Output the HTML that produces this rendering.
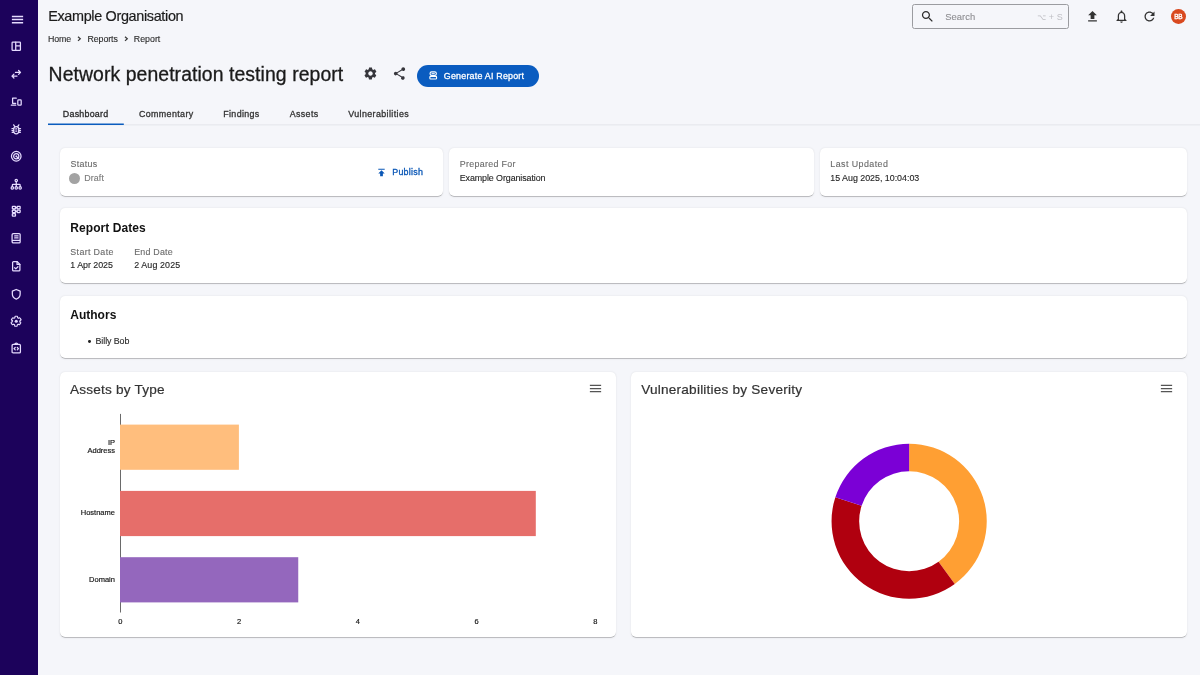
<!DOCTYPE html>
<html lang="en"><head><meta charset="utf-8"><title>Network penetration testing report</title>
<style>
*{box-sizing:border-box;margin:0;padding:0}
html,body{width:1200px;height:675px;overflow:hidden;background:#f5f6fa;font-family:"Liberation Sans", Arial, Helvetica, sans-serif;}
.t{position:absolute;white-space:nowrap;line-height:1;display:block}
.i{position:absolute;display:block;overflow:visible}
.abs{position:absolute}
.card{position:absolute;background:#fff;border-radius:5px;box-shadow:0 1.25px .6px -.6px rgba(0,0,0,.16),0 .6px .6px 0 rgba(0,0,0,.11),0 .6px 2px 0 rgba(0,0,0,.10)}
#sidebar{left:0;top:0;width:37.6px;height:675px;background:#1c025b}
</style></head><body>
<nav aria-label="Main navigation"><div id="sidebar" class="abs"></div>
<svg class="i" style="left:10.20px;top:11.50px;color:#e6dcff;" width="15" height="15" viewBox="0 0 24 24" fill="currentColor"><path d="M3 18.200h18v-2.400H3v2.400zm0-5h18v-2.400H3v2.400zm0-7.400v2.400h18V5.800H3z"/></svg>
<svg class="i" style="left:10.20px;top:40.20px;color:#e6dcff;" width="12.5" height="12.5" viewBox="0 0 24 24" fill="currentColor"><rect x="4" y="4" width="16" height="16" rx="1.5" fill="none" stroke="currentColor" stroke-width="2.4" stroke-linejoin="round" stroke-linecap="round"/><path d="M11 4v16M11 11.5h9" fill="none" stroke="currentColor" stroke-width="2.4" stroke-linejoin="round" stroke-linecap="round"/></svg>
<svg class="i" style="left:10.20px;top:67.65px;color:#e6dcff;" width="12.5" height="12.5" viewBox="0 0 24 24" fill="currentColor"><path d="M10.500 8.500H20M16.500 4.800L20.200 8.500 16.500 12.200M13.500 15.500H4M7.500 11.800L3.800 15.500 7.500 19.200" fill="none" stroke="currentColor" stroke-width="2.4" stroke-linejoin="round" stroke-linecap="round"/></svg>
<svg class="i" style="left:10.20px;top:95.15px;color:#e6dcff;" width="12.5" height="12.5" viewBox="0 0 24 24" fill="currentColor"><path d="M12 6H5v10h6M2.5 19.5H11" fill="none" stroke="currentColor" stroke-width="2.4" stroke-linejoin="round" stroke-linecap="round"/><rect x="15" y="9.5" width="6.5" height="10" rx="1.5" fill="none" stroke="currentColor" stroke-width="2.4" stroke-linejoin="round" stroke-linecap="round"/></svg>
<svg class="i" style="left:10.20px;top:123.05px;color:#e6dcff;" width="12.5" height="12.5" viewBox="0 0 24 24" fill="currentColor"><rect x="7.200" y="6.800" width="9.600" height="14" rx="4.800" fill="none" stroke="currentColor" stroke-width="2.4" stroke-linejoin="round" stroke-linecap="round"/><path d="M7 11H3.800M7 14.500H3.800M7 18H4.200M17 11h3.200M17 14.500h3.200M17 18h2.800M9 6.500L7 3.500M15 6.500L17 3.500" fill="none" stroke="currentColor" stroke-width="2.4" stroke-linejoin="round" stroke-linecap="round" stroke-width="1.900"/><path d="M11 11.500h2M11 15.500h2" fill="none" stroke="currentColor" stroke-width="2.4" stroke-linejoin="round" stroke-linecap="round" stroke-width="1.700"/></svg>
<svg class="i" style="left:10.20px;top:149.95px;color:#e6dcff;" width="12.5" height="12.5" viewBox="0 0 24 24" fill="currentColor"><circle cx="12" cy="12" r="9.2" fill="none" stroke="currentColor" stroke-width="2.4" stroke-linejoin="round" stroke-linecap="round"/><circle cx="12" cy="12" r="5" fill="none" stroke="currentColor" stroke-width="2.4" stroke-linejoin="round" stroke-linecap="round" stroke-width="1.8"/><circle cx="12" cy="12" r="1.6"/><path d="M12 12l4 4" fill="none" stroke="currentColor" stroke-width="2.4" stroke-linejoin="round" stroke-linecap="round" stroke-width="1.8"/></svg>
<svg class="i" style="left:10.20px;top:177.65px;color:#e6dcff;" width="12.5" height="12.5" viewBox="0 0 24 24" fill="currentColor"><circle cx="12" cy="4.800" r="2.300" fill="none" stroke="currentColor" stroke-width="2.4" stroke-linejoin="round" stroke-linecap="round" stroke-width="1.8"/><circle cx="4.500" cy="19" r="2.300" fill="none" stroke="currentColor" stroke-width="2.4" stroke-linejoin="round" stroke-linecap="round" stroke-width="1.8"/><circle cx="12" cy="19" r="2.300" fill="none" stroke="currentColor" stroke-width="2.4" stroke-linejoin="round" stroke-linecap="round" stroke-width="1.8"/><circle cx="19.500" cy="19" r="2.300" fill="none" stroke="currentColor" stroke-width="2.4" stroke-linejoin="round" stroke-linecap="round" stroke-width="1.8"/><path d="M12 7.200V16.500M4.500 16.500V13.500a1.500 1.500 0 0 1 1.500-1.500H18a1.500 1.500 0 0 1 1.500 1.500V16.500" fill="none" stroke="currentColor" stroke-width="2.4" stroke-linejoin="round" stroke-linecap="round" stroke-width="1.8"/></svg>
<svg class="i" style="left:10.20px;top:205.15px;color:#e6dcff;" width="12.5" height="12.5" viewBox="0 0 24 24" fill="currentColor"><rect x="4.500" y="2.500" width="6" height="4.800" rx=".8" fill="none" stroke="currentColor" stroke-width="2.4" stroke-linejoin="round" stroke-linecap="round" stroke-width="1.8"/><rect x="4.500" y="9.600" width="6" height="4.800" rx=".8" fill="none" stroke="currentColor" stroke-width="2.4" stroke-linejoin="round" stroke-linecap="round" stroke-width="1.8"/><rect x="4.500" y="16.700" width="6" height="4.800" rx=".8" fill="none" stroke="currentColor" stroke-width="2.4" stroke-linejoin="round" stroke-linecap="round" stroke-width="1.8"/><rect x="13.500" y="2.500" width="6" height="4.800" rx=".8" fill="none" stroke="currentColor" stroke-width="2.4" stroke-linejoin="round" stroke-linecap="round" stroke-width="1.8"/><rect x="13.500" y="9.600" width="6" height="4.800" rx=".8" fill="none" stroke="currentColor" stroke-width="2.4" stroke-linejoin="round" stroke-linecap="round" stroke-width="1.8"/><path d="M10.500 5h3M10.500 12h3M7.500 7.300v2.300M7.500 14.400v2.300" fill="none" stroke="currentColor" stroke-width="2.4" stroke-linejoin="round" stroke-linecap="round" stroke-width="1.600"/></svg>
<svg class="i" style="left:10.20px;top:232.25px;color:#e6dcff;" width="12.5" height="12.5" viewBox="0 0 24 24" fill="currentColor"><path d="M6.500 3h11a2 2 0 0 1 2 2v14a2 2 0 0 1-2 2h-11a2.500 2.500 0 0 1 0-5h13M4 18.500V5.500A2.500 2.500 0 0 1 6.500 3" fill="none" stroke="currentColor" stroke-width="2.4" stroke-linejoin="round" stroke-linecap="round"/><path d="M9 7.500h6.500M9 11.500h6.500" fill="none" stroke="currentColor" stroke-width="2.4" stroke-linejoin="round" stroke-linecap="round" stroke-width="1.8"/></svg>
<svg class="i" style="left:10.20px;top:260.35px;color:#e6dcff;" width="12.5" height="12.5" viewBox="0 0 24 24" fill="currentColor"><path d="M13.500 3H7a2 2 0 0 0-2 2v14a2 2 0 0 0 2 2h10a2 2 0 0 0 2-2V8.500L13.500 3z" fill="none" stroke="currentColor" stroke-width="2.4" stroke-linejoin="round" stroke-linecap="round"/><path d="M13.500 3v5.500H19" fill="none" stroke="currentColor" stroke-width="2.4" stroke-linejoin="round" stroke-linecap="round" stroke-width="1.600"/><path d="M9 14.800l2.200 2.200 4-4" fill="none" stroke="currentColor" stroke-width="2.4" stroke-linejoin="round" stroke-linecap="round"/></svg>
<svg class="i" style="left:10.20px;top:287.55px;color:#e6dcff;" width="12.5" height="12.5" viewBox="0 0 24 24" fill="currentColor"><path d="M12 2.800l7.500 3.300v5.500c0 4.600-3.200 8.300-7.500 9.600-4.300-1.300-7.500-5-7.500-9.600V6.100L12 2.800z" fill="none" stroke="currentColor" stroke-width="2.4" stroke-linejoin="round" stroke-linecap="round"/></svg>
<svg class="i" style="left:10.20px;top:315.05px;color:#e6dcff;" width="12.5" height="12.5" viewBox="0 0 24 24" fill="currentColor"><path d="M19.43 12.980c.04-.32.070-.64.070-.98s-.030-.66-.070-.98l2.110-1.650c.19-.15.240-.42.120-.64l-2-3.460c-.12-.22-.39-.3-.61-.22l-2.490 1c-.52-.4-1.080-.73-1.690-.98l-.38-2.650C14.460 2.180 14.250 2 14 2h-4c-.25 0-.46.180-.49.420l-.38 2.650c-.61.250-1.170.59-1.690.98l-2.490-1c-.23-.09-.49 0-.61.220l-2 3.460c-.13.220-.07.490.12.640l2.110 1.650c-.4.320-.7.650-.7.980s.3.660.07.980l-2.110 1.650c-.19.150-.24.420-.12.640l2 3.460c.12.220.39.300.61.220l2.490-1c.52.400 1.080.73 1.690.98l.38 2.650c.3.240.24.420.49.420h4c.25 0 .46-.18.490-.42l.38-2.650c.61-.25 1.170-.59 1.690-.98l2.490 1c.23.090.49 0 .61-.22l2-3.460c.12-.22.070-.49-.12-.64l-2.110-1.650z" fill="none" stroke="currentColor" stroke-width="2.300" stroke-linejoin="round" transform="translate(.6 .6) scale(.95)"/><circle cx="12" cy="12" r="3"/></svg>
<svg class="i" style="left:10.20px;top:342.25px;color:#e6dcff;" width="12.5" height="12.5" viewBox="0 0 24 24" fill="currentColor"><rect x="4" y="4.500" width="16" height="16.500" rx="2" fill="none" stroke="currentColor" stroke-width="2.4" stroke-linejoin="round" stroke-linecap="round"/><path d="M9.500 4.500a2.500 2.500 0 0 1 5 0" fill="none" stroke="currentColor" stroke-width="2.4" stroke-linejoin="round" stroke-linecap="round" stroke-width="1.800"/><path d="M10 10.500l-2.300 2.300L10 15.100M14 10.500l2.300 2.300L14 15.100" fill="none" stroke="currentColor" stroke-width="2.4" stroke-linejoin="round" stroke-linecap="round" stroke-width="1.700"/></svg>
</nav>
<!-- search box -->
<div class="abs" style="left:912.3px;top:4px;width:156.4px;height:25px;border:1px solid #9b9ca0;border-radius:2.5px"></div>
<!-- avatar -->
<div class="abs" style="left:1171.1px;top:8.8px;width:14.8px;height:14.8px;border-radius:50%;background:#d9491f"></div>
<!-- button -->
<div class="abs" style="left:416.7px;top:64.5px;width:122.8px;height:22.3px;border-radius:11.2px;background:#0a5cc0"></div>
<!-- chevrons -->
<svg class="i" style="left:77.2px;top:36.2px;color:#3a3a3a" width="5" height="6" viewBox="0 0 5 6" fill="none" stroke="currentColor" stroke-width="1.25"><path d="M1 .7L3.300 2.800 1 4.900"/></svg>
<svg class="i" style="left:123.9px;top:36.2px;color:#3a3a3a" width="5" height="6" viewBox="0 0 5 6" fill="none" stroke="currentColor" stroke-width="1.25"><path d="M1 .7L3.300 2.800 1 4.900"/></svg>
<!-- cards -->
<div class="card" style="left:60px;top:148px;width:383px;height:48px"></div>
<div class="card" style="left:449px;top:148px;width:365px;height:48px"></div>
<div class="card" style="left:820px;top:148px;width:367px;height:48px"></div>
<div class="card" style="left:60px;top:208px;width:1127px;height:75px"></div>
<div class="card" style="left:60px;top:296px;width:1127px;height:62px"></div>
<div class="card" style="left:60px;top:372px;width:556px;height:265px"></div>
<div class="card" style="left:631px;top:372px;width:556px;height:265px"></div>
<!-- status dot & bullet -->
<div class="abs" style="left:68.8px;top:172.5px;width:11.4px;height:11.4px;border-radius:50%;background:#a3a3a3"></div>
<div class="abs" style="left:87.900px;top:340.4px;width:2.8px;height:2.8px;border-radius:50%;background:#222"></div>
<svg class="i" style="left:0;top:0" width="1200" height="675" viewBox="0 0 1200 675"><rect x="48" y="124.500" width="1152" height=".8" fill="#dfe0e6"/><rect x="48" y="123.500" width="75.800" height="1.500" fill="#0b5cbe"/><rect x="120" y="413.900" width="1" height="198.600" fill="#6a6a6a"/><rect x="120" y="424.600" width="118.900" height="45.200" fill="#ffbe7d"/><rect x="120" y="490.900" width="415.800" height="45.200" fill="#e66e6a"/><rect x="120" y="557.200" width="178.250" height="45.200" fill="#9467bd"/><path d="M909.15 443.65A77.6 77.6 0 0 1 954.76 584.03L938.54 561.70A50.0 50.0 0 0 0 909.15 471.25Z" fill="#ff9f33"/><path d="M954.76 584.03A77.6 77.6 0 0 1 835.35 497.27L861.60 505.80A50.0 50.0 0 0 0 938.54 561.70Z" fill="#b0000f"/><path d="M835.35 497.27A77.6 77.6 0 0 1 909.15 443.65L909.15 471.25A50.0 50.0 0 0 0 861.60 505.80Z" fill="#7b00d6"/></svg>
<svg class="i" style="left:919.80px;top:9.20px;color:#2e2e2e;" width="15" height="15" viewBox="0 0 24 24" fill="currentColor"><path d="M15.500 14h-.79l-.28-.27C15.410 12.590 16 11.110 16 9.500 16 5.910 13.090 3 9.500 3S3 5.910 3 9.500 5.910 16 9.500 16c1.610 0 3.090-.59 4.230-1.570l.27.28v.79l5 4.990L20.490 19l-4.990-5zm-6 0C7.010 14 5 11.990 5 9.500S7.010 5 9.500 5 14 7.010 14 9.500 11.990 14 9.500 14z"/></svg>
<svg class="i" style="left:1084.90px;top:9.00px;color:#333;" width="15" height="15" viewBox="0 0 24 24" fill="currentColor"><path d="M5 20h14v-2H5v2zm0-10h4v6h6v-6h4l-7-7-7 7z"/></svg>
<svg class="i" style="left:1113.60px;top:8.70px;color:#333;" width="15" height="15" viewBox="0 0 24 24" fill="currentColor"><path d="M12 22c1.100 0 2-.9 2-2h-4c0 1.100.9 2 2 2zm6-6v-5c0-3.070-1.630-5.640-4.500-6.320V4c0-.83-.67-1.500-1.500-1.500s-1.500.67-1.500 1.500v.68C7.640 5.360 6 7.920 6 11v5l-2 2v1h16v-1l-2-2zm-2 1H8v-6c0-2.480 1.510-4.500 4-4.500s4 2.020 4 4.500v6z"/></svg>
<svg class="i" style="left:1142.10px;top:9.00px;color:#333;" width="15" height="15" viewBox="0 0 24 24" fill="currentColor"><path d="M17.650 6.350C16.200 4.900 14.210 4 12 4c-4.420 0-7.990 3.580-7.990 8s3.570 8 7.990 8c3.730 0 6.840-2.550 7.730-6h-2.080c-.82 2.330-3.040 4-5.650 4-3.310 0-6-2.690-6-6s2.690-6 6-6c1.660 0 3.140.69 4.220 1.780L13 11h7V4l-2.350 2.350z"/></svg>
<svg class="i" style="left:363.35px;top:66.10px;color:#36363c;" width="15" height="15" viewBox="0 0 24 24" fill="currentColor"><path d="M19.140 12.940c.04-.3.060-.61.060-.94 0-.32-.020-.64-.070-.94l2.030-1.580c.18-.14.230-.41.120-.61l-1.920-3.320c-.12-.22-.37-.29-.59-.22l-2.390.96c-.5-.38-1.030-.7-1.620-.94l-.36-2.540c-.04-.24-.24-.41-.48-.41h-3.840c-.24 0-.43.170-.47.410l-.36 2.540c-.59.240-1.130.57-1.620.94l-2.390-.96c-.22-.08-.47 0-.59.220L2.740 8.870c-.12.210-.8.470.12.610l2.030 1.580c-.5.300-.9.630-.9.940s.2.640.7.940l-2.030 1.580c-.18.140-.23.410-.12.610l1.920 3.320c.12.220.37.290.59.220l2.390-.96c.5.380 1.030.7 1.620.94l.36 2.540c.5.240.24.410.48.410h3.840c.24 0 .44-.17.470-.41l.36-2.540c.59-.24 1.130-.56 1.620-.94l2.390.96c.22.080.47 0 .59-.22l1.920-3.320c.12-.22.070-.47-.12-.61l-2.010-1.580zM12 15.600c-1.980 0-3.600-1.620-3.600-3.600s1.620-3.600 3.600-3.600 3.600 1.620 3.600 3.600-1.620 3.600-3.600 3.600z"/></svg>
<svg class="i" style="left:392.25px;top:66.00px;color:#36363c;" width="15" height="15" viewBox="0 0 24 24" fill="currentColor"><path d="M18 16.080c-.76 0-1.440.3-1.960.77L8.910 12.700c.05-.23.090-.46.090-.7s-.04-.47-.09-.7l7.050-4.110c.54.500 1.250.81 2.040.81 1.660 0 3-1.340 3-3s-1.340-3-3-3-3 1.340-3 3c0 .24.040.47.090.7L8.040 9.810C7.500 9.310 6.790 9 6 9c-1.660 0-3 1.340-3 3s1.340 3 3 3c.79 0 1.500-.31 2.040-.81l7.120 4.160c-.5.210-.8.430-.8.650 0 1.610 1.310 2.920 2.920 2.920s2.920-1.310 2.920-2.920-1.310-2.920-2.920-2.920z"/></svg>
<svg class="i" style="left:375.85px;top:166.90px;color:#0a57b6;" width="11.0" height="11.0" viewBox="0 0 24 24" fill="currentColor"><path d="M5 4v2h14V4H5zm0 10h4v6h6v-6h4l-7-7-7 7z"/></svg>
<svg class="i" style="left:588.15px;top:381.20px;color:#555;" width="15" height="15" viewBox="0 0 24 24" fill="currentColor"><path d="M3 18h18v-2H3v2zm0-5h18v-2H3v2zm0-7v2h18V6H3z"/></svg>
<svg class="i" style="left:1159.40px;top:381.20px;color:#555;" width="15" height="15" viewBox="0 0 24 24" fill="currentColor"><path d="M3 18h18v-2H3v2zm0-5h18v-2H3v2zm0-7v2h18V6H3z"/></svg>
<svg class="i" style="left:428.70px;top:70.90px;color:#fff;height:9.1px;" width="8.4" height="8.4" viewBox="0 0 12 13" fill="currentColor"><rect x="1.500" y="1.200" width="9" height="5" rx="2.300" fill="none" stroke="#fff" stroke-width="1.600"/><rect x="1.200" y="7.600" width="9.600" height="3.800" rx="1.200" fill="none" stroke="#fff" stroke-width="1.600"/><path d="M4.300 3.700h3.400" stroke="#fff" stroke-width="1.300" stroke-linecap="round"/></svg>
<div id="txt" style="position:absolute;left:0;top:0;width:1200px;height:675px;will-change:transform">
<span class="t" style="left:48.20px;top:9px;font-size:14.4px;color:#1c1c1c;letter-spacing:-0.325px;-webkit-text-stroke:0.2px #1c1c1c;">Example Organisation</span>
<span class="t" style="left:48.00px;top:35px;font-size:8.8px;color:#2a2a2a;letter-spacing:-0.091px;-webkit-text-stroke:0.12px #2a2a2a;">Home</span>
<span class="t" style="left:87.50px;top:35px;font-size:8.8px;color:#2a2a2a;letter-spacing:-0.086px;-webkit-text-stroke:0.12px #2a2a2a;">Reports</span>
<span class="t" style="left:133.80px;top:35px;font-size:8.8px;color:#2a2a2a;letter-spacing:0.017px;-webkit-text-stroke:0.12px #2a2a2a;">Report</span>
<span class="t" style="left:48.60px;top:65px;font-size:19.4px;color:#1a1a1a;letter-spacing:0.075px;-webkit-text-stroke:0.3px #1a1a1a;">Network penetration testing report</span>
<span class="t" style="left:62.80px;top:110px;font-size:8.9px;color:#2b2b2b;letter-spacing:0.245px;-webkit-text-stroke:0.3px #2b2b2b;">Dashboard</span>
<span class="t" style="left:139.00px;top:110px;font-size:8.9px;color:#333;letter-spacing:0.373px;-webkit-text-stroke:0.3px #333;">Commentary</span>
<span class="t" style="left:223.30px;top:110px;font-size:8.9px;color:#333;letter-spacing:0.337px;-webkit-text-stroke:0.3px #333;">Findings</span>
<span class="t" style="left:289.70px;top:110px;font-size:8.9px;color:#333;letter-spacing:0.378px;-webkit-text-stroke:0.3px #333;">Assets</span>
<span class="t" style="left:348.30px;top:110px;font-size:8.9px;color:#333;letter-spacing:0.387px;-webkit-text-stroke:0.3px #333;">Vulnerabilities</span>
<span class="t" style="left:443.80px;top:72px;font-size:8.9px;color:#fff;letter-spacing:0.219px;-webkit-text-stroke:0.3px #fff;">Generate AI Report</span>
<span class="t" style="left:945.30px;top:12px;font-size:9.4px;color:#8f8f93;letter-spacing:0.043px;-webkit-text-stroke:0.12px #8f8f93;">Search</span>
<span class="t" style="left:1037.2px;top:13px;font-size:9.0px;color:#bfbfc4;word-spacing:.1px;font-family:'Liberation Sans','DejaVu Sans',sans-serif;"><span style="font-size:7.8px">⌥</span> + S</span>
<span class="t" style="left:1174.30px;top:14px;font-size:6.5px;color:#fff;letter-spacing:-0.271px;-webkit-text-stroke:0.3px #fff;">BB</span>
<span class="t" style="left:70.50px;top:160px;font-size:8.9px;color:#6b6b6b;letter-spacing:0.314px;-webkit-text-stroke:0.12px #6b6b6b;">Status</span>
<span class="t" style="left:84.20px;top:174px;font-size:8.9px;color:#7a7a7a;letter-spacing:0.128px;-webkit-text-stroke:0.12px #7a7a7a;">Draft</span>
<span class="t" style="left:392.20px;top:168px;font-size:8.9px;color:#0a57b6;letter-spacing:0.268px;-webkit-text-stroke:0.3px #0a57b6;">Publish</span>
<span class="t" style="left:459.70px;top:160px;font-size:8.9px;color:#6b6b6b;letter-spacing:0.306px;-webkit-text-stroke:0.12px #6b6b6b;">Prepared For</span>
<span class="t" style="left:459.70px;top:174px;font-size:8.9px;color:#1f1f1f;letter-spacing:-0.077px;-webkit-text-stroke:0.12px #1f1f1f;">Example Organisation</span>
<span class="t" style="left:830.30px;top:160px;font-size:8.9px;color:#6b6b6b;letter-spacing:0.432px;-webkit-text-stroke:0.12px #6b6b6b;">Last Updated</span>
<span class="t" style="left:830.30px;top:174px;font-size:8.9px;color:#1f1f1f;letter-spacing:-0.019px;-webkit-text-stroke:0.12px #1f1f1f;">15 Aug 2025, 10:04:03</span>
<span class="t" style="left:70.30px;top:222px;font-size:12.0px;color:#111;letter-spacing:0.074px;font-weight:700;">Report Dates</span>
<span class="t" style="left:70.30px;top:248px;font-size:8.9px;color:#6b6b6b;letter-spacing:0.348px;-webkit-text-stroke:0.12px #6b6b6b;">Start Date</span>
<span class="t" style="left:70.30px;top:261px;font-size:8.9px;color:#1f1f1f;letter-spacing:-0.039px;-webkit-text-stroke:0.12px #1f1f1f;">1 Apr 2025</span>
<span class="t" style="left:134.20px;top:248px;font-size:8.9px;color:#6b6b6b;letter-spacing:0.213px;-webkit-text-stroke:0.12px #6b6b6b;">End Date</span>
<span class="t" style="left:134.20px;top:261px;font-size:8.9px;color:#1f1f1f;letter-spacing:0.118px;-webkit-text-stroke:0.12px #1f1f1f;">2 Aug 2025</span>
<span class="t" style="left:70.30px;top:309px;font-size:12.0px;color:#111;letter-spacing:0.001px;font-weight:700;">Authors</span>
<span class="t" style="left:95.50px;top:337px;font-size:8.9px;color:#2a2a2a;letter-spacing:-0.078px;-webkit-text-stroke:0.12px #2a2a2a;">Billy Bob</span>
<span class="t" style="left:70.00px;top:383px;font-size:13.6px;color:#333;letter-spacing:0.202px;-webkit-text-stroke:0.2px #333;">Assets by Type</span>
<span class="t" style="left:641.30px;top:383px;font-size:13.6px;color:#333;letter-spacing:0.211px;-webkit-text-stroke:0.2px #333;">Vulnerabilities by Severity</span>
<span class="t" style="left:107.91px;top:439px;font-size:7.5px;color:#151515;-webkit-text-stroke:0.18px #151515;">IP</span>
<span class="t" style="left:87.49px;top:447px;font-size:7.5px;color:#151515;-webkit-text-stroke:0.18px #151515;">Address</span>
<span class="t" style="left:80.72px;top:509px;font-size:7.5px;color:#151515;-webkit-text-stroke:0.18px #151515;">Hostname</span>
<span class="t" style="left:89.06px;top:576px;font-size:7.5px;color:#151515;-webkit-text-stroke:0.18px #151515;">Domain</span>
<span class="t" style="left:118.21px;top:618px;font-size:7.5px;color:#151515;-webkit-text-stroke:0.18px #151515;">0</span>
<span class="t" style="left:236.96px;top:618px;font-size:7.5px;color:#151515;-webkit-text-stroke:0.18px #151515;">2</span>
<span class="t" style="left:355.71px;top:618px;font-size:7.5px;color:#151515;-webkit-text-stroke:0.18px #151515;">4</span>
<span class="t" style="left:474.46px;top:618px;font-size:7.5px;color:#151515;-webkit-text-stroke:0.18px #151515;">6</span>
<span class="t" style="left:593.21px;top:618px;font-size:7.5px;color:#151515;-webkit-text-stroke:0.18px #151515;">8</span>
</div>
</body></html>
